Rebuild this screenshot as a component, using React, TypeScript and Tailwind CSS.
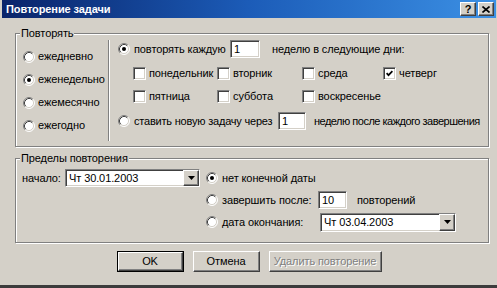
import React from 'react'

const sunken =
  'bg-white border border-t-[#808080] border-l-[#808080] border-b-white border-r-white shadow-[inset_1px_1px_0_#404040,inset_-1px_-1px_0_#d4d0c8]'
const raised =
  'bg-[#d4d0c8] border border-t-white border-l-white border-b-[#404040] border-r-[#404040] shadow-[inset_-1px_-1px_0_#808080]'

function Radio({ checked = false }: { checked?: boolean }) {
  return (
    <svg width="12" height="12" viewBox="0 0 12 12" className="shrink-0">
      <circle cx="6" cy="6" r="5" fill="#fff" />
      <path d="M2.11 9.89A5.5 5.5 0 0 1 9.89 2.11" fill="none" stroke="#808080" />
      <path d="M2.11 9.89A5.5 5.5 0 0 0 9.89 2.11" fill="none" stroke="#fff" />
      <path d="M2.82 9.18A4.5 4.5 0 0 1 9.18 2.82" fill="none" stroke="#404040" />
      <path d="M2.82 9.18A4.5 4.5 0 0 0 9.18 2.82" fill="none" stroke="#d4d0c8" />
      {checked && <circle cx="6" cy="6" r="2" fill="#000" />}
    </svg>
  )
}

function Check({ checked = false }: { checked?: boolean }) {
  return (
    <span className={`w-[13px] h-[13px] shrink-0 flex items-center justify-center ${sunken}`}>
      {checked && (
        <svg width="7" height="7" viewBox="0 0 7 7">
          <path d="M0.6 3.2L2.5 5.2L6.4 1.2" fill="none" stroke="#000" strokeWidth="1.7" />
        </svg>
      )}
    </span>
  )
}

function Combo({ value, className }: { value: string; className: string }) {
  return (
    <div className={`shrink-0 flex items-stretch ${sunken} ${className}`}>
      <span className="flex-1 pl-[3px] flex items-center leading-none">{value}</span>
      <span className={`w-[16px] flex items-center justify-center ${raised}`}>
        <svg width="7" height="4" viewBox="0 0 7 4">
          <path d="M0 0H7L3.5 4Z" fill="#000" />
        </svg>
      </span>
    </div>
  )
}

function Group({ title, className, children }: { title: string; className: string; children: React.ReactNode }) {
  return (
    <fieldset className={`border border-[#808080] shadow-[inset_1px_1px_0_#fff,1px_1px_0_#fff] ${className}`}>
      <legend className="ml-[4px] px-[1px] bg-[#d4d0c8] leading-[13px]">{title}</legend>
      {children}
    </fieldset>
  )
}

const days: [string, boolean][] = [
  ['понедельник', false],
  ['вторник', false],
  ['среда', false],
  ['четверг', true],
  ['пятница', false],
  ['суббота', false],
  ['воскресенье', false],
]

export default function App() {
  return (
    <div className="w-[497px] h-[288px] bg-[#d4d0c8] pl-[2px] pr-[1px] flex flex-col overflow-hidden whitespace-nowrap border-b-[3px] border-b-[#3c3c3c] font-['Liberation_Sans',Arial,sans-serif] text-[11px] tracking-[-0.1px] text-black">
      {/* title bar */}
      <div className="h-[18px] shrink-0 flex items-center justify-between bg-linear-to-r from-[#0a246a] via-[#1c5cb8] to-[#3c90e4]">
        <span className="pl-[4px] font-bold text-white">Повторение задачи</span>
        <div className="flex gap-[2px] pr-[2px]">
          <span className={`w-[16px] h-[14px] flex items-center justify-center font-bold leading-none ${raised}`}>?</span>
          <span className={`w-[16px] h-[14px] flex items-center justify-center ${raised}`}>
            <svg width="8" height="7" viewBox="0 0 8 7">
              <path d="M0.5 0.5L7.5 6.5M7.5 0.5L0.5 6.5" stroke="#000" strokeWidth="1.6" />
            </svg>
          </span>
        </div>
      </div>

      <div className="pl-[13px]">
        <Group title="Повторять" className="mt-[9px] w-[474px] h-[120px]">
          <div className="flex h-[105px]">
            <div className="w-[92px] shrink-0 pl-[7px] pt-[5px] flex flex-col">
              {[
                ['ежедневно', false],
                ['еженедельно', true],
                ['ежемесячно', false],
                ['ежегодно', false],
              ].map(([label, on]) => (
                <div key={label as string} className="h-[23px] flex items-center gap-[3px]">
                  <Radio checked={on as boolean} />
                  <span>{label}</span>
                </div>
              ))}
            </div>
            <div className="w-[2px] h-[101px] shrink-0 border-l border-l-[#808080] border-r border-r-white" />
            <div className="pl-[8px] flex flex-col shrink-0">
              <div className="h-[18px] flex items-center">
                <div className="w-[112px] shrink-0 flex items-center gap-[4px]">
                  <Radio checked />
                  <span>повторять каждую</span>
                </div>
                <div className={`w-[30px] h-[18px] shrink-0 pl-[3px] flex items-center ${sunken}`}>1</div>
                <span className="ml-[12px]">неделю в следующие дни:</span>
              </div>
              <div className="mt-[4px] ml-[15px] grid grid-cols-[84px_85px_81px_auto]">
                {days.map(([d, on]) => (
                  <div key={d} className="h-[23px] flex items-center gap-[3px]">
                    <Check checked={on} />
                    <span>{d}</span>
                  </div>
                ))}
              </div>
              <div className="mt-[4px] h-[18px] flex items-center">
                <div className="w-[160px] shrink-0 flex items-center gap-[4px]">
                  <Radio />
                  <span className="tracking-[-0.2px]">ставить новую задачу через</span>
                </div>
                <div className={`w-[28px] h-[18px] shrink-0 pl-[3px] flex items-center ${sunken}`}>1</div>
                <span className="ml-[8px] tracking-[-0.5px]">неделю после каждого завершения</span>
              </div>
            </div>
          </div>
        </Group>

        <Group title="Пределы повторения" className="mt-[5px] w-[474px] h-[91px]">
          <div className="flex h-[77px] pl-[6px] pt-[2px]">
            <div className="h-[22px] flex items-center shrink-0">
              <span className="w-[43px]">начало:</span>
              <Combo value="Чт 30.01.2003" className="w-[135px] h-[18px]" />
            </div>
            <div className="ml-[6px] flex flex-col shrink-0">
              <div className="h-[22px] flex items-center gap-[4px]">
                <Radio checked />
                <span>нет конечной даты</span>
              </div>
              <div className="h-[22px] flex items-center">
                <div className="w-[112px] shrink-0 flex items-center gap-[4px]">
                  <Radio />
                  <span>завершить после:</span>
                </div>
                <div className={`w-[29px] h-[18px] shrink-0 pl-[3px] flex items-center ${sunken}`}>10</div>
                <span className="ml-[10px]">повторений</span>
              </div>
              <div className="h-[22px] flex items-center">
                <div className="w-[114px] shrink-0 flex items-center gap-[4px]">
                  <Radio />
                  <span>дата окончания:</span>
                </div>
                <Combo value="Чт 03.04.2003" className="w-[136px] h-[19px]" />
              </div>
            </div>
          </div>
        </Group>
      </div>

      <div className="mt-[8px] flex justify-center gap-[9px]">
        <div className="border border-black">
          <div className={`w-[65px] h-[19px] flex items-center justify-center ${raised}`}>OK</div>
        </div>
        <div className={`w-[67px] h-[21px] flex items-center justify-center ${raised}`}>Отмена</div>
        <div className={`w-[113px] h-[21px] flex items-center justify-center text-[#808080] [text-shadow:1px_1px_0_#fff] ${raised}`}>
          Удалить повторение
        </div>
      </div>
    </div>
  )
}
